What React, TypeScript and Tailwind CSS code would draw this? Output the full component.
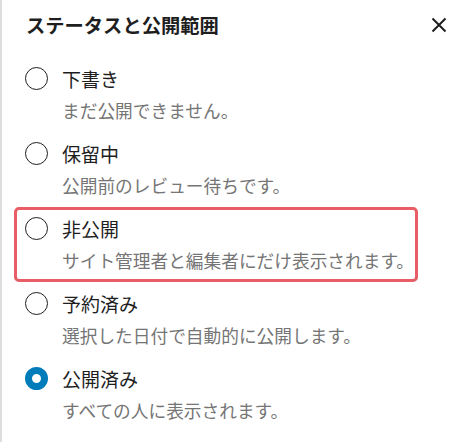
import React from 'react';

interface StatusOption {
  value: string;
  label: string;
  description: string;
}

const options: StatusOption[] = [
  { value: 'draft', label: '下書き', description: 'まだ公開できません。' },
  { value: 'pending', label: '保留中', description: '公開前のレビュー待ちです。' },
  { value: 'private', label: '非公開', description: 'サイト管理者と編集者にだけ表示されます。' },
  { value: 'future', label: '予約済み', description: '選択した日付で自動的に公開します。' },
  { value: 'publish', label: '公開済み', description: 'すべての人に表示されます。' },
];

function CloseIcon() {
  return (
    <svg width="16" height="16" viewBox="0 0 16 16" fill="none" stroke="#1e1e1e" strokeWidth="2">
      <path d="M1.5 1.5 14.5 14.5M14.5 1.5 1.5 14.5" />
    </svg>
  );
}

export default function App() {
  const selected = 'publish';
  const highlighted = 'private';

  return (
    <div
      className="w-[465px] h-[442px] bg-white border-l-2 border-[#dddddd] overflow-hidden"
      style={{ fontFamily: '"Noto Sans CJK JP", "Noto Sans", sans-serif' }}
    >
      <div className="flex items-center justify-between h-[50px] pl-[24px] pr-[17px]">
        <h2 className="text-[19.3px] leading-[24px] font-bold text-[#1e1e1e]">ステータスと公開範囲</h2>
        <button type="button" className="flex items-center justify-center w-[18px] h-[18px]">
          <CloseIcon />
        </button>
      </div>

      <div className="mt-[7px] flex flex-col">
        {options.map((opt) => {
          const isSelected = opt.value === selected;
          return (
            <label key={opt.value} className="relative mx-[12px] w-[404px] h-[75px] flex pl-[11px]">
              <span
                className={
                  isSelected
                    ? 'mt-[10px] w-[23px] h-[23px] shrink-0 rounded-full border-[7px] border-[#007cba] bg-white'
                    : 'mt-[10px] w-[23px] h-[23px] shrink-0 rounded-full border-[1.5px] border-[#1e1e1e] bg-white'
                }
              />
              <span className="ml-[14px] pt-[10px] flex flex-col">
                <span className="text-[19px] leading-[24px] text-[#1e1e1e]">{opt.label}</span>
                <span className="mt-[8px] text-[17.7px] leading-[22px] text-[#757575] whitespace-nowrap">
                  {opt.description}
                </span>
              </span>
              {opt.value === highlighted && (
                <span className="absolute inset-0 border-[3px] border-[#e95d66] rounded-[5px] pointer-events-none" />
              )}
            </label>
          );
        })}
      </div>
    </div>
  );
}
